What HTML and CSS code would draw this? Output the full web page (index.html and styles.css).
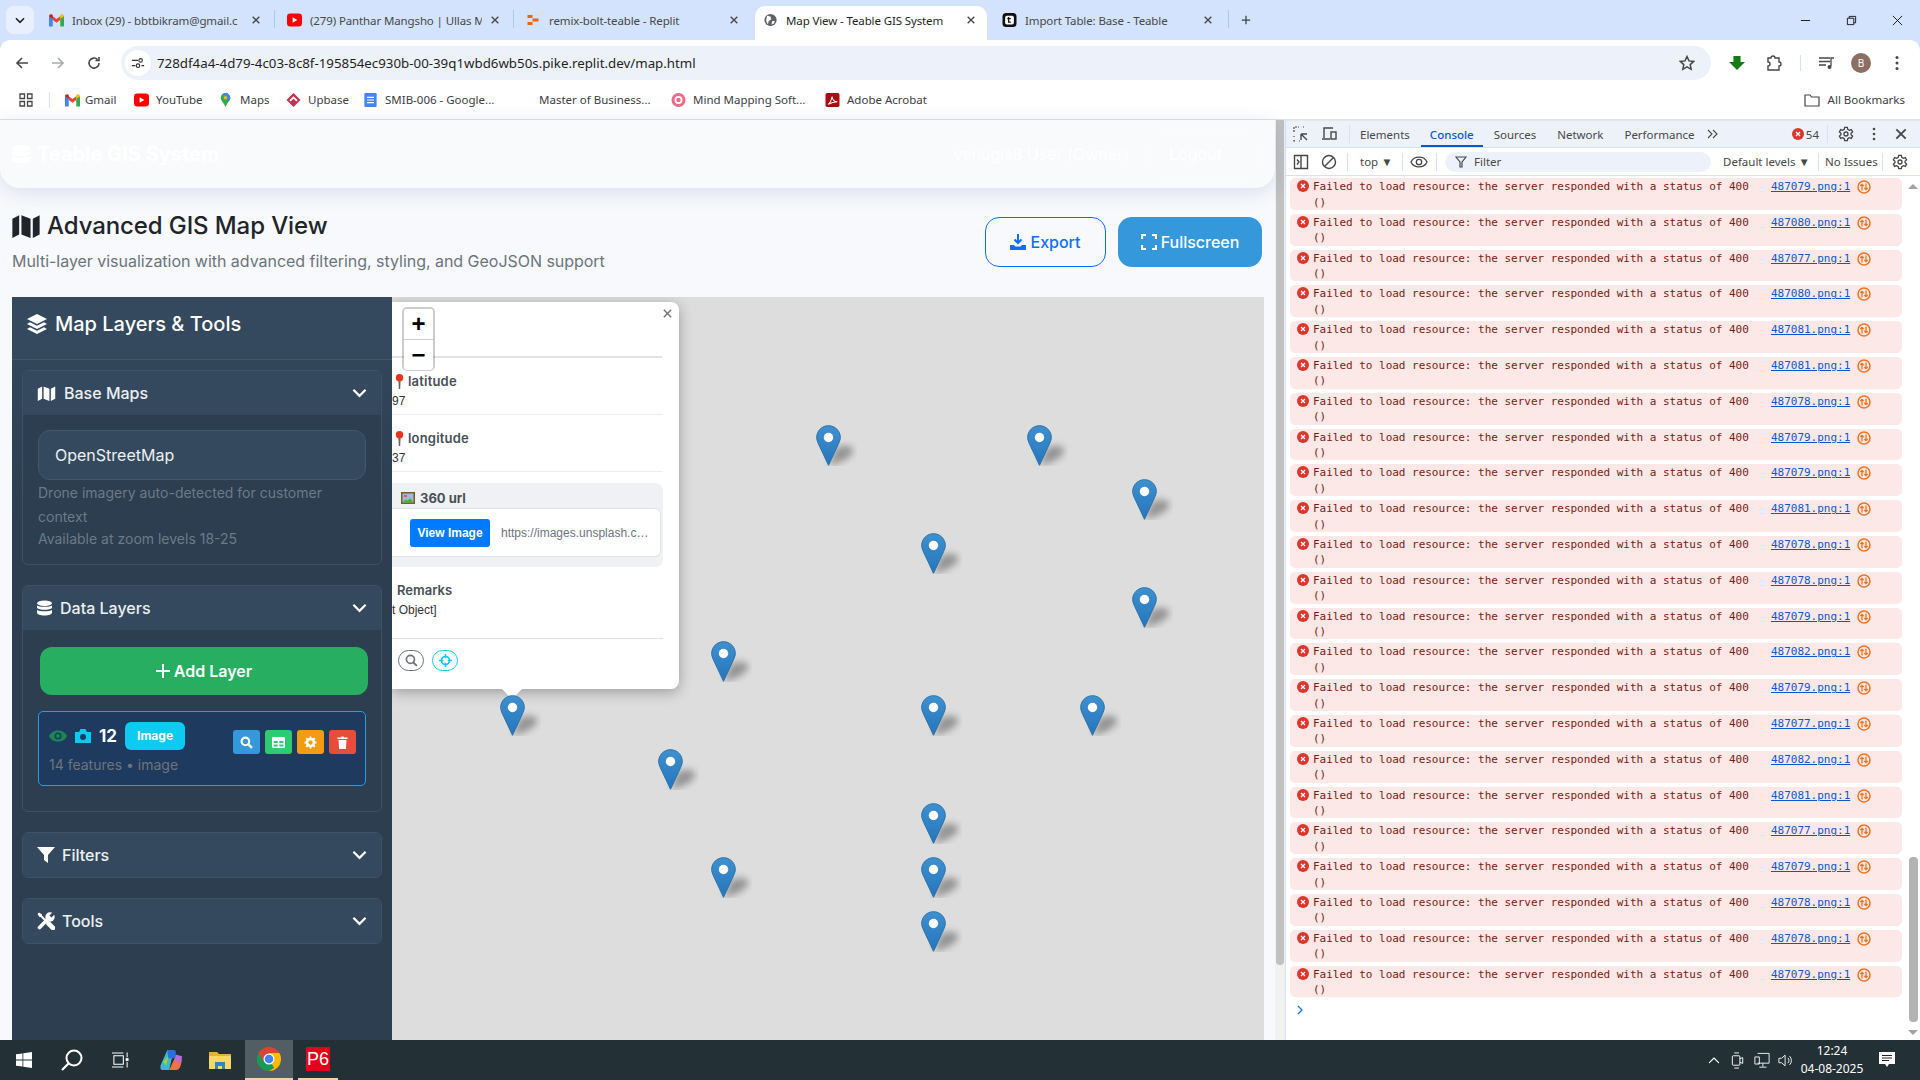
FILE: index.html
```html
<!DOCTYPE html>
<html>
<head>
  <meta charset="UTF-8">
  <title>Map View - Teable GIS System</title>
  <link rel="stylesheet" href="styles.css">
</head>
<body>
  <svg class="defs" width="0" height="0">
    <defs>
      <symbol id="i-close" viewBox="0 0 12 12"><path d="M2 2l8 8M10 2l-8 8" fill="none" stroke="currentColor" stroke-width="1.6"/></symbol>
      <symbol id="i-gmail" viewBox="0 0 16 14"><path d="M0 3l2 -1 2 1v11H1a1 1 0 0 1-1-1z" fill="#4285f4"/><path d="M12 3l2-1 2 1v10a1 1 0 0 1-1 1h-3z" fill="#34a853"/><path d="M4 7V3l4 3 4-3v4l-4 3z" fill="#ea4335"/><path d="M0 3c0-2 2-3 4-1.500V6z" fill="#c5221f"/><path d="M12 1.500c2-1.500 4-.5 4 1.500l-4 3z" fill="#fbbc04"/></symbol>
      <symbol id="i-yt" viewBox="0 0 16 14"><rect width="16" height="14" y="0" rx="3.500" fill="#f00"/><path d="M6 4l5 3-5 3z" fill="#fff"/></symbol>
      <symbol id="i-err" viewBox="0 0 12 12"><circle cx="6" cy="6" r="6" fill="#dc362e"/><path d="M4 4l4 4M8 4l-4 4" stroke="#fff" stroke-width="1.300"/></symbol>
      <symbol id="i-net" viewBox="0 0 14 14"><circle cx="7" cy="7" r="6" fill="none" stroke="#ee7423" stroke-width="1.500"/><path d="M5 10.500V4.500M3.300 6L5 4.300 6.700 6M9 3.500v6M7.300 8L9 9.700 10.700 8" fill="none" stroke="#ee7423" stroke-width="1.300"/></symbol>
      <symbol id="i-gear" viewBox="0 0 24 24"><path d="M10 2h4l.6 3 2.400 1.400 2.900-1 2 3.500-2.300 2v2.200l2.300 2-2 3.500-2.900-1-2.400 1.400-.6 3h-4l-.6-3L7 17.600l-2.900 1-2-3.500 2.300-2v-2.200l-2.300-2 2-3.500 2.900 1L9.400 5z" fill="none" stroke="currentColor" stroke-width="2"/><circle cx="12" cy="12" r="3" fill="none" stroke="currentColor" stroke-width="2"/></symbol>
      <symbol id="i-map" viewBox="0 0 24 22"><path d="M0 5l6-3v17l-6 3zM8 2l8 3v17l-8-3zM18 5l6-3v17l-6 3z" fill="currentColor"/></symbol>
      <symbol id="i-down" viewBox="0 0 16 10"><path d="M1.500 1.500L8 8l6.500-6.500" fill="none" stroke="currentColor" stroke-width="2.400"/></symbol>
      <symbol id="i-db" viewBox="0 0 16 16"><ellipse cx="8" cy="3" rx="8" ry="3" fill="currentColor"/><path d="M0 5.200c2 2 14 2 16 0V8c-2 2.500-14 2.500-16 0zM0 10c2 2 14 2 16 0v3c0 1.700-3.600 3-8 3s-8-1.300-8-3z" fill="currentColor"/></symbol>
      <symbol id="i-marker" viewBox="0 0 41 41">
        <path class="m-shadow" d="M13 40.500L19 24c7-5 17-4 18 1s-9 12-24 15.500z"/>
        <path d="M12.500 .7C5.900 .7 .7 5.900 .7 12.400c0 2.300 .8 4.300 1.700 6.400L12.500 40.300l10-21.500c.9-2.100 1.800-4.100 1.800-6.400C24.300 5.900 19.100 .7 12.500 .7z" fill="url(#pin)" stroke="#2a72a8"/>
        <circle cx="12.500" cy="12.500" r="4.700" fill="#fff"/>
      </symbol>
      <symbol id="i-pin" viewBox="0 0 8 14"><path d="M3 6h2l-.4 8h-1.200z" fill="#666"/><circle cx="4" cy="4" r="3.300" fill="#e8341c"/></symbol>
      <linearGradient id="pin" x1="0" y1="0" x2="0" y2="1"><stop offset="0" stop-color="#3f90cf"/><stop offset="1" stop-color="#2475bd"/></linearGradient>
    </defs>
  </svg>

  <div class="chrome">
    <div class="tabstrip">
      <div class="tabsearch"><svg class="ico10" viewBox="0 0 16 10"><use href="#i-down"/></svg></div>
      <div class="tab"><svg class="favicon"><use href="#i-gmail"/></svg><span class="tab-title">Inbox (29) - bbtbikram@gmail.c</span><svg class="tab-x"><use href="#i-close"/></svg></div>
      <div class="tab"><svg class="favicon"><use href="#i-yt"/></svg><span class="tab-title">(279) Panthar Mangsho | Ullas M</span><svg class="tab-x"><use href="#i-close"/></svg></div>
      <div class="tab no-sep"><svg class="favicon" viewBox="0 0 14 14"><path d="M1 2h5v3H1zM6 5.500h6v3H6zM1 9h5v3H1z" fill="#f26207"/></svg><span class="tab-title">remix-bolt-teable - Replit</span><svg class="tab-x"><use href="#i-close"/></svg></div>
      <div class="tab active"><svg class="favicon" viewBox="0 0 16 16"><circle cx="8" cy="8" r="7" fill="#5f6368"/><path d="M4 3l4 1 1 3-3 2-1 4-2-4zM10 9l3 0-1 3-3 1z" fill="#fff"/></svg><span class="tab-title">Map View - Teable GIS System</span><svg class="tab-x"><use href="#i-close"/></svg></div>
      <div class="tab no-sep"><svg class="favicon" viewBox="0 0 16 16"><rect width="16" height="16" rx="4" fill="#111"/><rect x="3" y="3" width="10" height="10" rx="2" fill="#fff"/><path d="M7 4.500v6h2.500M5.500 6.500h4" fill="none" stroke="#111" stroke-width="1.500"/></svg><span class="tab-title">Import Table: Base - Teable</span><svg class="tab-x"><use href="#i-close"/></svg></div>
      <span class="tab-sep"></span>
      <svg class="newtab" viewBox="0 0 12 12"><path d="M6 1v10M1 6h10" stroke="#3c4043" stroke-width="1.500"/></svg>
      <div class="winctl">
        <svg viewBox="0 0 12 12"><path d="M1 6h10" stroke="#111" stroke-width="1"/></svg>
        <svg viewBox="0 0 12 12"><path d="M1.500 3.500h7v7h-7zM3.500 3.500v-2h7v7h-2" fill="none" stroke="#111" stroke-width="1"/></svg>
        <svg viewBox="0 0 12 12"><path d="M1 1l10 10M11 1L1 11" stroke="#111" stroke-width="1"/></svg>
      </div>
    </div>
    <div class="toolbar">
      <svg class="nav" viewBox="0 0 16 16"><path d="M14 8H3M8 3L3 8l5 5" fill="none" stroke="#474747" stroke-width="1.600"/></svg>
      <svg class="nav" viewBox="0 0 16 16"><path d="M2 8h11M8 3l5 5-5 5" fill="none" stroke="#a8abb0" stroke-width="1.600"/></svg>
      <svg class="nav" viewBox="0 0 16 16"><path d="M13 8a5 5 0 1 1-1.500-3.500M13 2v3.500H9.500" fill="none" stroke="#474747" stroke-width="1.600"/></svg>
      <div class="omnibox">
        <div class="site-ico"><svg viewBox="0 0 16 16"><path d="M1 5h7M12 11h3M1 11h4" stroke="#333" stroke-width="1.400"/><circle cx="11" cy="5" r="2" fill="none" stroke="#333" stroke-width="1.300"/><circle cx="8" cy="11" r="2" fill="none" stroke="#333" stroke-width="1.300"/></svg></div>
        <span class="url">728df4a4-4d79-4c03-8c8f-195854ec930b-00-39q1wbd6wb50s.pike.replit.dev/map.html</span>
        <svg class="star" viewBox="0 0 16 16"><path d="M8 1.500l2 4.400 4.700.5-3.500 3.200 1 4.700L8 11.900l-4.200 2.400 1-4.700L1.300 6.400 6 5.900z" fill="none" stroke="#474747" stroke-width="1.500"/></svg>
      </div>
      <div class="tb-icons">
        <svg viewBox="0 0 18 16"><path d="M5 0h8v7h5l-9 9-9-9h5z" fill="#137c13"/></svg>
        <svg viewBox="0 0 16 16"><path d="M2 3h3a2 2 0 0 1 4 0h4v4a2 2 0 0 1 0 4v4H2v-4a2 2 0 0 0 0-4z" fill="none" stroke="#474747" stroke-width="1.400"/></svg>
        <span class="tb-sep"></span>
        <svg viewBox="0 0 16 16"><path d="M0 3h11M0 6.500h11M0 10h7" stroke="#474747" stroke-width="1.300"/><path d="M12 11V3h3" fill="none" stroke="#474747" stroke-width="1.300"/><circle cx="10.500" cy="12" r="2" fill="#474747"/></svg>
        <span class="avatar">B</span>
        <svg viewBox="0 0 16 16"><circle cx="8" cy="2.500" r="1.500" fill="#474747"/><circle cx="8" cy="8" r="1.500" fill="#474747"/><circle cx="8" cy="13.500" r="1.500" fill="#474747"/></svg>
      </div>
    </div>
    <div class="bookmarks">
      <svg class="apps" viewBox="0 0 14 14"><path d="M1 1h4.500v4.500H1zM8.500 1H13v4.500H8.500zM1 8.500h4.500V13H1zM8.500 8.500H13V13H8.500z" fill="none" stroke="#474747" stroke-width="1.300"/></svg>
      <span class="bm-sep"></span>
      <span class="bm bm-gmail"><svg><use href="#i-gmail"/></svg>Gmail</span>
      <span class="bm bm-yt"><svg><use href="#i-yt"/></svg>YouTube</span>
      <span class="bm bm-maps"><svg viewBox="0 0 12 16"><path d="M6 0a5.500 5.500 0 0 1 5.500 5.500C11.500 9 8 11 6 16 4 11 .5 9 .5 5.500A5.500 5.500 0 0 1 6 0z" fill="#34a853"/><path d="M2 2l8 7c1-1.500 1.500-2.500 1.500-3.500A5.500 5.500 0 0 0 6 0z" fill="#4285f4"/><circle cx="6" cy="5.500" r="2" fill="#fbbc04"/></svg>Maps</span>
      <span class="bm bm-up"><svg viewBox="0 0 16 16"><path d="M8 0l8 8-8 8-8-8z" fill="#c2334d"/><path d="M4 9l4-4 4 4" fill="none" stroke="#fff" stroke-width="2"/></svg>Upbase</span>
      <span class="bm bm-smib"><svg viewBox="0 0 14 16"><rect width="14" height="16" rx="1.500" fill="#4285f4"/><path d="M3 5h8M3 8h8M3 11h8" stroke="#fff" stroke-width="1.400"/></svg>SMIB-006 - Google...</span>
      <span class="bm bm-master">Master of Business...</span>
      <span class="bm bm-mind"><svg viewBox="0 0 16 16"><circle cx="8" cy="8" r="8" fill="#f06a8a"/><circle cx="8" cy="8" r="3.500" fill="none" stroke="#fff" stroke-width="2"/></svg>Mind Mapping Soft...</span>
      <span class="bm bm-acro"><svg viewBox="0 0 16 16"><rect width="16" height="16" rx="2" fill="#a80e10"/><path d="M3 13c3-2 4-6 4.500-9 .5 4 3 6 6 6-3 0-7 1-10.500 3z" fill="none" stroke="#fff" stroke-width="1.200"/></svg>Adobe Acrobat</span>
      <span class="bm bm-all"><svg viewBox="0 0 16 14"><path d="M1 2h5l1.500 2H15v9H1z" fill="none" stroke="#474747" stroke-width="1.200"/></svg>All Bookmarks</span>
    </div>
  </div>

  <div class="workarea">
    <div class="page">
      <header class="appbar">
        <div class="brand"><svg class="brand-ico"><use href="#i-db"/></svg>Teable GIS System</div>
        <div class="user">venugis8 User (Owner)</div>
        <div class="signout">Logout</div>
      </header>
      <div class="titlerow">
        <div>
          <h1><svg class="h1-ico"><use href="#i-map"/></svg>Advanced GIS Map View</h1>
          <p class="lead">Multi-layer visualization with advanced filtering, styling, and GeoJSON support</p>
        </div>
        <div class="actions">
          <button class="btn btn-outline"><svg viewBox="0 0 16 16"><path d="M8 0v9M4.500 5.500L8 9l3.500-3.500" fill="none" stroke="currentColor" stroke-width="2"/><path d="M0 11h4l1.500 1.500h5L12 11h4v5H0z" fill="currentColor"/></svg>Export</button>
          <button class="btn btn-blue"><svg viewBox="0 0 16 16"><path d="M1 5V1h4M11 1h4v4M15 11v4h-4M5 15H1v-4" fill="none" stroke="currentColor" stroke-width="2.200"/></svg>Fullscreen</button>
        </div>
      </div>
      <div class="mapwrap">
        <aside class="sidebar">
          <div class="side-head">
            <svg viewBox="0 0 20 20"><path d="M10 0l10 5-10 5L0 5z" fill="currentColor"/><path d="M3 8.300L0 10l10 5 10-5-3-1.700-7 3.500zM3 13.300L0 15l10 5 10-5-3-1.700-7 3.500z" fill="currentColor"/></svg>
            <span>Map Layers &amp; Tools</span>
          </div>
          <section class="panel">
            <div class="panel-head"><svg class="p-ico p-map"><use href="#i-map"/></svg><span>Base Maps</span><svg class="chev"><use href="#i-down"/></svg></div>
            <div class="panel-body basemaps">
              <div class="select">OpenStreetMap</div>
              <p class="hint">Drone imagery auto-detected for customer context</p>
              <p class="hint hint-2">Available at zoom levels 18-25</p>
            </div>
          </section>
          <section class="panel">
            <div class="panel-head"><svg class="p-ico p-db"><use href="#i-db"/></svg><span>Data Layers</span><svg class="chev"><use href="#i-down"/></svg></div>
            <div class="panel-body datalayers">
              <div class="add-layer"><svg viewBox="0 0 14 14"><path d="M7 0v14M0 7h14" stroke="#fff" stroke-width="2"/></svg>Add Layer</div>
              <div class="layer">
                <div class="layer-left">
                  <div class="layer-top">
                    <svg class="eye" viewBox="0 0 18 12"><path d="M0 6c3-7.500 15-7.500 18 0-3 7.500-15 7.500-18 0z" fill="#198754"/><circle cx="9" cy="6" r="3.500" fill="#1e3a5f"/><circle cx="9" cy="6" r="2" fill="#198754"/></svg>
                    <svg class="cam" viewBox="0 0 16 14"><path d="M0 3h4l1.500-3h5L12 3h4v11H0z" fill="#0dcaf0"/><circle cx="8" cy="8" r="3" fill="#1e3a5f"/></svg>
                    <b>12</b>
                    <span class="badge">Image</span>
                  </div>
                  <div class="layer-sub">14 features • image</div>
                </div>
                <div class="layer-btns">
                  <span class="lb lb-blue"><svg viewBox="0 0 12 12"><circle cx="5" cy="5" r="3.500" fill="none" stroke="#fff" stroke-width="2"/><path d="M7.500 7.500L11 11" stroke="#fff" stroke-width="2.200"/></svg></span>
                  <span class="lb lb-green"><svg viewBox="0 0 12 10"><path d="M0 1a1 1 0 0 1 1-1h10a1 1 0 0 1 1 1v8a1 1 0 0 1-1 1H1a1 1 0 0 1-1-1zM1.500 3.500v2h3.700v-2zm5.300 0v2h3.700v-2zm-5.300 3.300v1.800h3.700V6.800zm5.300 0v1.800h3.700V6.800z" fill="#fff" fill-rule="evenodd"/></svg></span>
                  <span class="lb lb-orange"><svg viewBox="0 0 12 12"><circle cx="6" cy="6" r="3.200" fill="none" stroke="#fff" stroke-width="2.400"/><path d="M6 .5v2M6 9.500v2M.5 6h2M9.500 6h2M2 2l1.500 1.500M8.500 8.500L10 10M10 2L8.500 3.500M3.500 8.500L2 10" stroke="#fff" stroke-width="1.800"/></svg></span>
                  <span class="lb lb-red"><svg viewBox="0 0 12 13"><path d="M1 1.500h3.500L5 .5h2l.5 1H11V3H1zM2 4h8l-.6 9H2.600z" fill="#fff"/></svg></span>
                </div>
              </div>
            </div>
          </section>
          <section class="panel">
            <div class="panel-head"><svg class="p-ico" viewBox="0 0 18 16"><path d="M0 0h18l-7 8v8l-4-3V8z" fill="currentColor"/></svg><span>Filters</span><svg class="chev"><use href="#i-down"/></svg></div>
          </section>
          <section class="panel">
            <div class="panel-head"><svg class="p-ico p-tools" viewBox="0 0 18 18"><path d="M2 2l9.500 9.500" stroke="currentColor" stroke-width="2"/><path d="M.5 2L2 .5l3 2-.2 2.300-2.300.2z" fill="currentColor"/><path d="M11.500 11.500l4.500 4.500" stroke="currentColor" stroke-width="4.600" stroke-linecap="round"/><path d="M2.500 15.500L11 7" stroke="currentColor" stroke-width="3.600" stroke-linecap="round"/><circle cx="13" cy="5" r="4.700" fill="currentColor"/><path d="M13.500 4.500L18 0" stroke="#34495e" stroke-width="3"/></svg><span>Tools</span><svg class="chev"><use href="#i-down"/></svg></div>
          </section>
        </aside>
        <div class="map">
          <svg class="marker" style="left:424px;top:128px"><use href="#i-marker"/></svg>
          <svg class="marker" style="left:635px;top:128px"><use href="#i-marker"/></svg>
          <svg class="marker" style="left:740px;top:182px"><use href="#i-marker"/></svg>
          <svg class="marker" style="left:529px;top:236px"><use href="#i-marker"/></svg>
          <svg class="marker" style="left:740px;top:290px"><use href="#i-marker"/></svg>
          <svg class="marker" style="left:319px;top:344px"><use href="#i-marker"/></svg>
          <svg class="marker" style="left:529px;top:398px"><use href="#i-marker"/></svg>
          <svg class="marker" style="left:688px;top:398px"><use href="#i-marker"/></svg>
          <svg class="marker" style="left:266px;top:452px"><use href="#i-marker"/></svg>
          <svg class="marker" style="left:529px;top:506px"><use href="#i-marker"/></svg>
          <svg class="marker" style="left:319px;top:560px"><use href="#i-marker"/></svg>
          <svg class="marker" style="left:529px;top:560px"><use href="#i-marker"/></svg>
          <svg class="marker" style="left:529px;top:614px"><use href="#i-marker"/></svg>

          <div class="popup">
            <span class="popup-x"><svg><use href="#i-close"/></svg></span>
            <div class="pop-title"></div>
            <div class="pop-row">
              <div class="pop-label"><svg class="pushpin"><use href="#i-pin"/></svg>latitude</div>
              <div class="pop-val">97</div>
            </div>
            <div class="pop-row">
              <div class="pop-label"><svg class="pushpin"><use href="#i-pin"/></svg>longitude</div>
              <div class="pop-val">37</div>
            </div>
            <div class="urlbox">
              <div class="urlbox-head"><svg viewBox="0 0 14 12"><rect width="14" height="12" fill="#7a5c1e"/><rect x="1.500" y="1.500" width="11" height="9" fill="#9bd"/><path d="M1.500 10.500l3-3 2 1 3-2 3 4z" fill="#5a3"/><rect x="3" y="3" width="3" height="2" fill="#e55"/></svg>360 url</div>
              <div class="urlbox-body">
                <span class="viewbtn">View Image</span>
                <span class="urltext">https://images.unsplash.c…</span>
              </div>
            </div>
            <div class="pop-remarks">
              <div class="pop-label">Remarks</div>
              <div class="pop-val">t Object]</div>
            </div>
            <div class="pop-btns">
              <span class="pill pill-gray"><svg viewBox="0 0 12 12"><circle cx="5" cy="5" r="3.700" fill="none" stroke="#6c757d" stroke-width="1.600"/><path d="M7.800 7.800L11 11" stroke="#6c757d" stroke-width="1.800"/></svg></span>
              <span class="pill pill-cyan"><svg viewBox="0 0 12 12"><circle cx="6" cy="6" r="3.700" fill="none" stroke="#0dcaf0" stroke-width="1.600"/><path d="M6 0v4M6 8v4M0 6h4M8 6h4" stroke="#0dcaf0" stroke-width="1.400"/></svg></span>
            </div>
            <span class="popup-tip"></span>
          </div>
          <svg class="marker marker-top" style="left:108px;top:398px"><use href="#i-marker"/></svg>

          <div class="zoomctl">
            <span>+</span>
            <span>−</span>
          </div>
        </div>
      </div>
    </div>
    <div class="page-scroll"><span></span></div>

    <div class="devtools">
      <div class="dt-tabs">
        <svg class="dt-ico" viewBox="0 0 16 16"><path d="M1 6V1h5M10 1h1M1 10v1M1 14v1h1M6 15h1" fill="none" stroke="#474747" stroke-width="1.200" stroke-dasharray="2 1"/><path d="M8 8h6M8 8v6M8 8l6 6" fill="none" stroke="#474747" stroke-width="1.400"/></svg>
        <svg class="dt-ico" viewBox="0 0 16 16"><path d="M3 12V2h9M1 13h8" fill="none" stroke="#474747" stroke-width="1.400"/><rect x="10" y="6" width="5" height="7" fill="none" stroke="#474747" stroke-width="1.400"/></svg>
        <span class="dt-sep"></span>
        <span class="dt-tab">Elements</span>
        <span class="dt-tab current">Console</span>
        <span class="dt-tab">Sources</span>
        <span class="dt-tab">Network</span>
        <span class="dt-tab">Performance</span>
        <svg class="dt-more" viewBox="0 0 12 10"><path d="M1 1l4 4-4 4M6 1l4 4-4 4" fill="none" stroke="#474747" stroke-width="1.100"/></svg>
        <span class="dt-right">
          <svg class="dt-err"><use href="#i-err"/></svg><span class="dt-count">54</span>
          <span class="dt-sep"></span>
          <svg class="dt-ico dt-gear"><use href="#i-gear"/></svg>
          <svg class="dt-ico" viewBox="0 0 16 16"><circle cx="8" cy="3" r="1.300" fill="#474747"/><circle cx="8" cy="8" r="1.300" fill="#474747"/><circle cx="8" cy="13" r="1.300" fill="#474747"/></svg>
          <svg class="dt-ico dt-x"><use href="#i-close"/></svg>
        </span>
      </div>
      <div class="dt-filter">
        <svg class="dt-ico" viewBox="0 0 16 16"><path d="M1.500 1.500h13v13h-13zM8 1.500v13M4 5.500L6 8l-2 2.500" fill="none" stroke="#474747" stroke-width="1.400"/></svg>
        <svg class="dt-ico" viewBox="0 0 16 16"><circle cx="8" cy="8" r="6.500" fill="none" stroke="#474747" stroke-width="1.400"/><path d="M3.500 12.500l9-9" stroke="#474747" stroke-width="1.400"/></svg>
        <span class="dt-sep"></span>
        <span class="dt-top">top ▼</span>
        <span class="dt-sep"></span>
        <svg class="dt-eye" viewBox="0 0 18 12"><path d="M1 6c3-6.500 13-6.500 16 0-3 6.500-13 6.500-16 0z" fill="none" stroke="#474747" stroke-width="1.300"/><circle cx="9" cy="6" r="2.700" fill="none" stroke="#474747" stroke-width="1.300"/></svg>
        <span class="dt-sep"></span>
        <div class="dt-input"><svg viewBox="0 0 12 12"><path d="M1 1h10L7 6v5H5V6z" fill="none" stroke="#474747" stroke-width="1.200"/></svg>Filter</div>
        <span class="dt-levels">Default levels ▼</span>
        <span class="dt-sep"></span>
        <span class="dt-issues">No Issues</span>
        <span class="dt-sep"></span>
        <svg class="dt-ico dt-gear"><use href="#i-gear"/></svg>
      </div>
      <div class="console">
        <div class="messages">
          <div class="msg"><svg class="msg-err"><use href="#i-err"/></svg><pre>Failed to load resource: the server responded with a status of 400
()</pre><a>487079.png:1</a><svg class="msg-net"><use href="#i-net"/></svg></div>
          <div class="msg"><svg class="msg-err"><use href="#i-err"/></svg><pre>Failed to load resource: the server responded with a status of 400
()</pre><a>487080.png:1</a><svg class="msg-net"><use href="#i-net"/></svg></div>
          <div class="msg"><svg class="msg-err"><use href="#i-err"/></svg><pre>Failed to load resource: the server responded with a status of 400
()</pre><a>487077.png:1</a><svg class="msg-net"><use href="#i-net"/></svg></div>
          <div class="msg"><svg class="msg-err"><use href="#i-err"/></svg><pre>Failed to load resource: the server responded with a status of 400
()</pre><a>487080.png:1</a><svg class="msg-net"><use href="#i-net"/></svg></div>
          <div class="msg"><svg class="msg-err"><use href="#i-err"/></svg><pre>Failed to load resource: the server responded with a status of 400
()</pre><a>487081.png:1</a><svg class="msg-net"><use href="#i-net"/></svg></div>
          <div class="msg"><svg class="msg-err"><use href="#i-err"/></svg><pre>Failed to load resource: the server responded with a status of 400
()</pre><a>487081.png:1</a><svg class="msg-net"><use href="#i-net"/></svg></div>
          <div class="msg"><svg class="msg-err"><use href="#i-err"/></svg><pre>Failed to load resource: the server responded with a status of 400
()</pre><a>487078.png:1</a><svg class="msg-net"><use href="#i-net"/></svg></div>
          <div class="msg"><svg class="msg-err"><use href="#i-err"/></svg><pre>Failed to load resource: the server responded with a status of 400
()</pre><a>487079.png:1</a><svg class="msg-net"><use href="#i-net"/></svg></div>
          <div class="msg"><svg class="msg-err"><use href="#i-err"/></svg><pre>Failed to load resource: the server responded with a status of 400
()</pre><a>487079.png:1</a><svg class="msg-net"><use href="#i-net"/></svg></div>
          <div class="msg"><svg class="msg-err"><use href="#i-err"/></svg><pre>Failed to load resource: the server responded with a status of 400
()</pre><a>487081.png:1</a><svg class="msg-net"><use href="#i-net"/></svg></div>
          <div class="msg"><svg class="msg-err"><use href="#i-err"/></svg><pre>Failed to load resource: the server responded with a status of 400
()</pre><a>487078.png:1</a><svg class="msg-net"><use href="#i-net"/></svg></div>
          <div class="msg"><svg class="msg-err"><use href="#i-err"/></svg><pre>Failed to load resource: the server responded with a status of 400
()</pre><a>487078.png:1</a><svg class="msg-net"><use href="#i-net"/></svg></div>
          <div class="msg"><svg class="msg-err"><use href="#i-err"/></svg><pre>Failed to load resource: the server responded with a status of 400
()</pre><a>487079.png:1</a><svg class="msg-net"><use href="#i-net"/></svg></div>
          <div class="msg"><svg class="msg-err"><use href="#i-err"/></svg><pre>Failed to load resource: the server responded with a status of 400
()</pre><a>487082.png:1</a><svg class="msg-net"><use href="#i-net"/></svg></div>
          <div class="msg"><svg class="msg-err"><use href="#i-err"/></svg><pre>Failed to load resource: the server responded with a status of 400
()</pre><a>487079.png:1</a><svg class="msg-net"><use href="#i-net"/></svg></div>
          <div class="msg"><svg class="msg-err"><use href="#i-err"/></svg><pre>Failed to load resource: the server responded with a status of 400
()</pre><a>487077.png:1</a><svg class="msg-net"><use href="#i-net"/></svg></div>
          <div class="msg"><svg class="msg-err"><use href="#i-err"/></svg><pre>Failed to load resource: the server responded with a status of 400
()</pre><a>487082.png:1</a><svg class="msg-net"><use href="#i-net"/></svg></div>
          <div class="msg"><svg class="msg-err"><use href="#i-err"/></svg><pre>Failed to load resource: the server responded with a status of 400
()</pre><a>487081.png:1</a><svg class="msg-net"><use href="#i-net"/></svg></div>
          <div class="msg"><svg class="msg-err"><use href="#i-err"/></svg><pre>Failed to load resource: the server responded with a status of 400
()</pre><a>487077.png:1</a><svg class="msg-net"><use href="#i-net"/></svg></div>
          <div class="msg"><svg class="msg-err"><use href="#i-err"/></svg><pre>Failed to load resource: the server responded with a status of 400
()</pre><a>487079.png:1</a><svg class="msg-net"><use href="#i-net"/></svg></div>
          <div class="msg"><svg class="msg-err"><use href="#i-err"/></svg><pre>Failed to load resource: the server responded with a status of 400
()</pre><a>487078.png:1</a><svg class="msg-net"><use href="#i-net"/></svg></div>
          <div class="msg"><svg class="msg-err"><use href="#i-err"/></svg><pre>Failed to load resource: the server responded with a status of 400
()</pre><a>487078.png:1</a><svg class="msg-net"><use href="#i-net"/></svg></div>
          <div class="msg"><svg class="msg-err"><use href="#i-err"/></svg><pre>Failed to load resource: the server responded with a status of 400
()</pre><a>487079.png:1</a><svg class="msg-net"><use href="#i-net"/></svg></div>
          <svg class="prompt" viewBox="0 0 6 10"><path d="M1 1l4 4-4 4" fill="none" stroke="#1a73e8" stroke-width="1.300"/></svg>
        </div>
        <div class="con-scroll">
          <i class="arrow-up"></i>
          <span class="con-thumb"></span>
          <i class="arrow-down"></i>
        </div>
      </div>
    </div>
  </div>

  <div class="taskbar">
    <svg class="tk tk-win" viewBox="0 0 16 16"><path d="M0 2.300l6.500-.9v6.200H0zM7.300 1.300L16 0v7.600H7.300zM0 8.400h6.500v6.200L0 13.700zM7.300 8.400H16V16l-8.700-1.300z" fill="#fff"/></svg>
    <svg class="tk tk-search" viewBox="0 0 22 22"><circle cx="13" cy="9" r="7.500" fill="none" stroke="#fff" stroke-width="2"/><path d="M7.500 14.500L1 21" stroke="#fff" stroke-width="2.200"/></svg>
    <svg class="tk tk-view" viewBox="0 0 18 16"><path d="M2 3.500h10v9H2zM0 .5h12M0 15.500h12M16 0v5M16 10v6" fill="none" stroke="#fff" stroke-width="1.100"/><rect x="14.500" y="6" width="3" height="3" fill="#fff"/></svg>
    <svg class="tk tk-copilot" viewBox="0 0 24 24"><path d="M8 1h7l-5 22H3C0 23 0 20 1 17z" fill="#3fb6c9"/><path d="M8 1h7c2 0 3 2 2 5l-1 4H9z" fill="#2a6fe0"/><path d="M16 10h6c2 0 2 3 1 6-1 5-3 7-6 7h-7z" fill="#f0704a"/><path d="M17 6l7 2-1 7-7-3z" fill="#b66be0"/><path d="M3 14l6-6-2 10z" fill="#9ad14b"/></svg>
    <svg class="tk tk-files" viewBox="0 0 22 18"><path d="M0 1h8l2 2h12v15H0z" fill="#e8b034"/><rect y="5" width="22" height="13" fill="#fbd669"/><path d="M6 11h10v7h-3v-3H9v3H6z" fill="#2f86c9"/></svg>
    <div class="tk-chrome"><svg viewBox="0 0 24 24"><circle cx="12" cy="12" r="12" fill="#db4437"/><path d="M12 12L1.600 18A12 12 0 0 0 12 24l5.200-3z" fill="#0f9d58"/><path d="M12 12l5.200 9L12 24A12 12 0 0 0 24 12a12 12 0 0 0-1.600-6H12z" fill="#fbbc04"/><path d="M1.600 6A12 12 0 0 0 1.600 18L6.800 15z" fill="#0f9d58"/><circle cx="12" cy="12" r="5.500" fill="#fff"/><circle cx="12" cy="12" r="4.300" fill="#4285f4"/></svg></div>
    <div class="tk-p6"><span>P6</span></div>
    <div class="tray">
      <svg class="tray-chev" viewBox="0 0 12 7"><path d="M1 6l5-5 5 5" fill="none" stroke="#fff" stroke-width="1.100"/></svg>
      <svg class="tray-ico" viewBox="0 0 14 18"><rect x="1" y="4" width="8" height="10" rx="1" fill="none" stroke="#fff"/><path d="M9 7l3-1v6l-3-1M3 1h5M3 17h5" fill="none" stroke="#fff"/></svg>
      <svg class="tray-ico" viewBox="0 0 18 18"><path d="M4 1h13v11H4M1 5h5v8H1zM10 12v4M6 16.500h8" fill="none" stroke="#fff"/></svg>
      <svg class="tray-ico" viewBox="0 0 18 18"><path d="M1 6.500h3L8 3v12l-4-3.500H1zM11 6a4 4 0 0 1 0 6M13 4a7 7 0 0 1 0 10" fill="none" stroke="#fff"/></svg>
      <div class="clock"><div>12:24</div><div>04-08-2025</div></div>
      <svg class="tray-note" viewBox="0 0 16 16"><path d="M0 0h16v12H10l-2 3-2-3H0z" fill="#fff"/><path d="M3 3.500h10M3 6h10M3 8.500h7" stroke="#222" stroke-width="1"/></svg>
    </div>
  </div>
</body>
</html>
```

FILE: styles.css
```css
* {
  box-sizing: border-box;
}

html, body {
  margin: 0;
  padding: 0;
  height: 1080px;
  overflow: hidden;
}

body {
  display: flex;
  flex-direction: column;
  font-family: "Noto Sans", sans-serif;
  background-color: #ffffff;
}

svg {
  display: block;
  flex: none;
}

.defs {
  position: absolute;
}

/* browser chrome */
.chrome {
  height: 120px;
  flex: none;
  background-color: #d3e3fd;
}

.tabstrip {
  height: 40px;
  display: flex;
  align-items: flex-end;
  padding-left: 6px;
}

.tabsearch {
  width: 28px;
  height: 28px;
  margin-bottom: 6px;
  border-radius: 8px;
  background-color: #e8f0fd;
  display: flex;
  align-items: center;
  justify-content: center;
}

.ico10 {
  width: 10px;
  height: 7px;
  color: #1f1f1f;
}

.tab {
  width: 239px;
  height: 34px;
  padding: 0 14px 6px 12px;
  display: flex;
  align-items: center;
  font-size: 11.500px;
  color: #474747;
  position: relative;
  flex: none;
}

.tabsearch + .tab {
  width: 240px;
  margin-left: 1px;
  padding-left: 14px;
}

.tab::after {
  content: "";
  position: absolute;
  right: 0;
  top: 4px;
  height: 18px;
  width: 1px;
  background-color: #a8c7fa;
}

.tab.no-sep::after,
.tab.active::after {
  display: none;
}

.tab.active {
  width: 232px;
  margin-left: 2px;
  padding-left: 8px;
  padding-right: 11px;
  border-radius: 10px 10px 0 0;
  background-color: #ffffff;
  color: #1f1f1f;
}

.tab.active + .tab {
  margin-left: 1px;
  padding-left: 14px;
  padding-right: 12px;
  width: 237px;
}

.favicon {
  width: 15px;
  height: 14px;
  margin-right: 8px;
}

.tab-title {
  flex: 1;
  overflow: hidden;
  white-space: nowrap;
  letter-spacing: -.12px;
}

.tab-x {
  width: 10px;
  height: 10px;
  margin-left: 8px;
  color: #474747;
}

.tab-sep {
  width: 1px;
  height: 18px;
  margin: 0 0 12px 3px;
  background-color: #a8c7fa;
}

.newtab {
  width: 10px;
  height: 10px;
  margin: 0 0 15px 12px;
}

.winctl {
  margin-left: auto;
  display: flex;
  gap: 35px;
  padding: 0 17px 14px 0;
}

.winctl svg {
  width: 11px;
  height: 11px;
}

.toolbar {
  height: 40px;
  background-color: #ffffff;
  border-radius: 10px 10px 0 0;
  display: flex;
  align-items: center;
  padding: 6px 0 0 14px;
}

.nav {
  width: 16px;
  height: 16px;
  margin-right: 20px;
}

.omnibox {
  width: 1590px;
  height: 34px;
  flex: none;
  margin-left: -1px;
  border-radius: 17px;
  background-color: #edf2fa;
  display: flex;
  align-items: center;
  padding-left: 4px;
}

.site-ico {
  width: 26px;
  height: 26px;
  border-radius: 13px;
  background-color: #ffffff;
  padding: 6px;
}

.url {
  margin-left: 6px;
  font-size: 13.300px;
  color: #1f1f1f;
}

.star {
  width: 16px;
  height: 16px;
  margin-left: auto;
  margin-right: 16px;
}

.tb-icons {
  flex: 1;
  display: flex;
  align-items: center;
  padding-left: 18px;
}

.tb-icons svg {
  width: 16px;
  height: 16px;
  margin-right: 21px;
}

.tb-sep {
  width: 1px;
  height: 16px;
  margin: 0 18px 0 -3px;
  background-color: #d3e3fd;
}

.avatar {
  width: 20px;
  height: 20px;
  border-radius: 10px;
  margin: 0 18px 0 -5px;
  background-color: #8d6e63;
  color: #ffffff;
  font-size: 10px;
  text-align: center;
  line-height: 20px;
}

.bookmarks {
  height: 40px;
  background-color: #ffffff;
  border-bottom: 1px solid #dfe1e5;
  display: flex;
  align-items: center;
  font-size: 11.500px;
  color: #3c4043;
  padding-left: 19px;
}

.apps {
  width: 14px;
  height: 14px;
  margin-right: 1px;
}

.bm-sep {
  width: 1px;
  height: 16px;
  margin: 0 15px;
  background-color: #d3e3fd;
}

.bm {
  display: flex;
  align-items: center;
  white-space: nowrap;
}

.bm svg {
  width: 15px;
  height: 14px;
  margin-right: 7px;
}

.bm-gmail svg { margin-right: 5px; }

.bm-gmail { width: 69px; }
.bm-yt { width: 84px; }
.bm-maps { width: 68px; }
.bm-up { width: 77px; }
.bm-smib { width: 176px; }
.bm-master { width: 132px; }
.bm-mind { width: 154px; }
.bm-acro { width: 400px; }
.bm-all { margin-left: auto; padding-right: 15px; }

.bm-all svg {
  width: 16px;
  height: 14px;
  margin-right: 8px;
}

/* page + devtools */
.workarea {
  flex: 1;
  min-height: 0;
  display: flex;
}

.page {
  width: 1275px;
  flex: none;
  font-family: Inter, "Liberation Sans", sans-serif;
  background-color: #f8f9fc;
  display: flex;
  flex-direction: column;
}

.appbar {
  height: 68px;
  flex: none;
  display: flex;
  align-items: center;
  padding-left: 12px;
  border-radius: 0 0 20px 20px;
  background-color: #f9fafc;
  box-shadow: 0 4px 20px rgba(44, 62, 140, .14);
  color: #ffffff;
  position: relative;
}

.brand {
  display: flex;
  align-items: center;
  gap: 7px;
  font-size: 20px;
  font-weight: 700;
}

.brand-ico {
  width: 18px;
  height: 20px;
}

.user {
  margin-left: auto;
  font-size: 16px;
}

.signout {
  width: 110px;
  margin: 0 17px 0 19px;
  padding: 14px 20px;
  border: 1px solid #fbfbfd;
  border-radius: 12px;
  font-size: 16px;
}

.titlerow {
  flex: none;
  height: 109px;
  display: flex;
  justify-content: space-between;
  padding: 21px 13px 0 12px;
}

h1 {
  margin: 0;
  display: flex;
  align-items: center;
  font-size: 24px;
  line-height: 33px;
  font-weight: 500;
  letter-spacing: -.1px;
  color: #212529;
}

.h1-ico {
  width: 28px;
  height: 25px;
  margin-right: 7px;
  color: #212529;
}

.lead {
  margin: 9px 0 0;
  font-size: 16px;
  line-height: 20px;
  letter-spacing: -.03px;
  color: #6c757d;
}

.actions {
  display: flex;
  gap: 12px;
  padding-top: 8px;
}

.btn {
  height: 50px;
  display: flex;
  align-items: center;
  justify-content: center;
  gap: 4px;
  border-radius: 14px;
  font-family: inherit;
  font-size: 16px;
  font-weight: 500;
  border: none;
}

.btn svg {
  width: 16px;
  height: 16px;
}

.btn-outline {
  width: 121px;
  border: 1px solid #0d6efd;
  background-color: transparent;
  color: #0d6efd;
}

.btn-blue {
  width: 144px;
  background-color: #3498db;
  color: #ffffff;
}

.mapwrap {
  flex: 1;
  min-height: 0;
  margin: 0 11px 0 12px;
  display: flex;
  overflow: hidden;
}

.sidebar {
  width: 380px;
  flex: none;
  padding: 0 10px;
  background: linear-gradient(180deg, #34495e 0%, #2c3e50 30%);
  color: #ecf0f1;
  position: relative;
  z-index: 5;
}

.side-head {
  height: 63px;
  margin: 0 -10px 10px;
  padding: 0 0 9px 15px;
  display: flex;
  align-items: center;
  gap: 8px;
  background-color: #34495e;
  border-bottom: 1px solid #3f566e;
  font-size: 20px;
  font-weight: 500;
  color: #ffffff;
}

.side-head svg {
  width: 20px;
  height: 20px;
}

.panel {
  margin-bottom: 20px;
  border: 1px solid #3e5266;
  border-radius: 6px;
  background-color: #2c3e50;
  overflow: hidden;
}

.panel-head {
  height: 44px;
  display: flex;
  align-items: center;
  padding: 0 14px;
  background-color: #34495e;
  font-size: 16px;
  font-weight: 500;
}

.p-ico {
  width: 18px;
  height: 16px;
  margin-right: 7px;
  color: #ffffff;
}

.p-map {
  width: 19px;
  margin-right: 8px;
}

.p-db {
  width: 15px;
  margin-right: 8px;
}

.p-tools {
  height: 18px;
}

.chev {
  width: 15px;
  height: 10px;
  margin-left: auto;
  color: #ffffff;
}

.basemaps {
  height: 149px;
  padding: 15px 15px 0;
}

.select {
  height: 50px;
  border: 1px solid #42586e;
  border-radius: 12px;
  background-color: #34495e;
  padding: 0 16px;
  line-height: 48px;
  font-size: 16px;
}

.hint {
  margin: 1px 0 0;
  font-size: 14px;
  line-height: 24px;
  color: #6c7a89;
}

.hint-2 {
  margin-top: 0;
  line-height: 20px;
}

.datalayers {
  height: 181px;
  padding: 17px 15px 0;
}

.add-layer {
  width: 328px;
  height: 48px;
  margin: 0 0 16px 2px;
  display: flex;
  align-items: center;
  justify-content: center;
  gap: 4px;
  border-radius: 12px;
  background-color: #27ae60;
  color: #ffffff;
  font-weight: 600;
  font-size: 16px;
}

.add-layer svg {
  width: 14px;
  height: 14px;
}

.layer {
  height: 75px;
  width: 328px;
  display: flex;
  justify-content: space-between;
  padding: 10px 9px 0 10px;
  border: 1px solid #3498db;
  border-radius: 5px;
  background-color: #1e3a5f;
}

.layer-top {
  display: flex;
  align-items: center;
  height: 28px;
}

.layer-top b {
  font-size: 17px;
  margin-right: 8px;
  font-weight: 700;
  color: #ffffff;
}

.eye {
  width: 18px;
  height: 12px;
  margin-right: 8px;
}

.cam {
  width: 16px;
  height: 14px;
  margin-right: 8px;
}

.badge {
  width: 60px;
  height: 28px;
  border-radius: 6px;
  background-color: #0dcaf0;
  font-size: 12px;
  font-weight: 700;
  color: #ffffff;
  text-align: center;
  line-height: 28px;
}

.layer-sub {
  margin-top: 6px;
  font-size: 14px;
  line-height: 18px;
  color: #6c757d;
}

.layer-btns {
  display: flex;
  gap: 5px;
  padding-top: 8px;
}

.lb {
  width: 27px;
  height: 24px;
  border-radius: 3px;
  display: flex;
  align-items: center;
  justify-content: center;
}

.lb svg {
  width: 13px;
  height: 13px;
}

.lb-blue { background-color: #3498db; }
.lb-green { background-color: #2ecc71; }
.lb-orange { background-color: #f39c12; }
.lb-red { background-color: #e74c3c; }

/* map */
.map {
  flex: 1;
  background-color: #dddddd;
  position: relative;
  overflow: hidden;
}

.marker {
  position: absolute;
  width: 41px;
  height: 41px;
}

.marker-top {
  z-index: 3;
}

.m-shadow {
  fill: rgba(0, 0, 0, .33);
  filter: blur(3.500px);
}

.zoomctl {
  position: absolute;
  left: 10px;
  top: 10px;
  z-index: 4;
  width: 33px;
  height: 64px;
  border: 2px solid rgba(0, 0, 0, .2);
  border-radius: 5px;
  background-clip: padding-box;
  display: flex;
  flex-direction: column;
}

.zoomctl span {
  flex: 1;
  background-color: #ffffff;
  font: 700 24px/30px "Liberation Sans", sans-serif;
  color: #000000;
  text-align: center;
}

.zoomctl span:first-child {
  border-bottom: 1px solid #cccccc;
  border-radius: 3px 3px 0 0;
}

.zoomctl span:last-child {
  border-radius: 0 0 3px 3px;
}

.popup {
  position: absolute;
  left: 0;
  top: 5px;
  width: 287px;
  height: 387px;
  padding-right: 16px;
  background-color: #ffffff;
  border-radius: 0 8px 8px 0;
  box-shadow: 0 3px 14px rgba(0, 0, 0, .3);
  z-index: 2;
  font-size: 12px;
  color: #333333;
}

.popup-x {
  position: absolute;
  right: 6px;
  top: 6px;
  color: #757575;
}

.popup-x svg {
  width: 11px;
  height: 11px;
}

.pop-title {
  height: 56px;
  margin-right: 1px;
  border-bottom: 2px solid #e3e3e3;
}

.pop-row {
  height: 57px;
  border-bottom: 1px solid #eeeeee;
  padding-top: 14px;
}

.pop-label {
  display: flex;
  align-items: center;
  padding-left: 5px;
  font-family: Inter, "Liberation Sans", sans-serif;
  font-size: 13px;
  line-height: 18px;
  font-weight: 600;
  color: #495057;
}

.pop-row .pop-label {
  padding-left: 3px;
  letter-spacing: .2px;
}

.pushpin {
  width: 9px;
  height: 16px;
  margin-right: 4px;
}

.pop-val {
  margin-top: 3px;
  font: 12px/16px "Liberation Sans", sans-serif;
  color: #333333;
}

.urlbox {
  margin: 11px 0 0;
  height: 84px;
  border-radius: 0 8px 8px 0;
  background-color: #eff1f4;
  padding-top: 4px;
}

.urlbox-head {
  height: 21px;
  display: flex;
  align-items: center;
  gap: 5px;
  padding-left: 9px;
  font-size: 13px;
  font-weight: 700;
  color: #495057;
}

.urlbox-head svg {
  width: 14px;
  height: 12px;
}

.urlbox-body {
  height: 49px;
  margin-right: 2px;
  display: flex;
  align-items: center;
  padding-left: 18px;
  gap: 11px;
  background-color: #ffffff;
  border: 1px solid #dee2e6;
  border-left: none;
  border-radius: 0 6px 6px 0;
}

.viewbtn {
  width: 80px;
  height: 28px;
  border-radius: 3px;
  background-color: #007bff;
  color: #ffffff;
  font: 700 12px/28px "Liberation Sans", sans-serif;
  text-align: center;
}

.urltext {
  font: 12px "Liberation Sans", sans-serif;
  color: #6c757d;
  white-space: nowrap;
}

.pop-remarks {
  height: 72px;
  padding-top: 14px;
  border-bottom: 1px solid #e3e3e3;
}

.pop-remarks .pop-val {
  margin-top: 3px;
}

.pop-btns {
  display: flex;
  gap: 8px;
  padding: 11px 0 0 6px;
}

.pill {
  width: 26px;
  height: 21px;
  border-radius: 11px;
  background-color: #ffffff;
  display: flex;
  align-items: center;
  justify-content: center;
}

.pill svg {
  width: 13px;
  height: 13px;
}

.pill-gray { border: 1px solid #6c757d; }
.pill-cyan { border: 1px solid #0dcaf0; }

.popup-tip {
  position: absolute;
  left: 110px;
  bottom: -10px;
  width: 20px;
  height: 10px;
  background-color: #ffffff;
  clip-path: polygon(0 0, 100% 0, 50% 100%);
}

/* scrollbar between page and devtools */
.page-scroll {
  width: 10px;
  flex: none;
  background-color: #f1f1f1;
  padding: 0 1px;
}

.page-scroll span {
  display: block;
  height: 845px;
  border-radius: 0 0 4px 4px;
  background-color: #c1c1c1;
}

/* devtools */
.devtools {
  flex: 1;
  min-width: 0;
  display: flex;
  flex-direction: column;
  border-left: 1px solid #d3e3fd;
  background-color: #ffffff;
  font-size: 11.500px;
  color: #474747;
}

.dt-tabs {
  height: 28px;
  flex: none;
  display: flex;
  align-items: center;
  padding-left: 7px;
  background-color: #edf2fa;
  border-top: 1px solid #e3e8ef;
  border-bottom: 1px solid #d3e3fd;
}

.dt-ico {
  width: 16px;
  height: 16px;
  margin-right: 12px;
  color: #474747;
}

.dt-sep {
  width: 1px;
  height: 18px;
  background-color: #d3e3fd;
  flex: none;
}

.dt-tab {
  height: 26px;
  padding: 0 10px;
  margin-right: 1px;
  line-height: 28px;
  white-space: nowrap;
}

.dt-tab.current {
  padding: 0 9px;
  color: #0b57d0;
  font-weight: 500;
  border-bottom: 2px solid #0b57d0;
}

.dt-more {
  width: 12px;
  height: 10px;
  margin-left: 1px;
}

.dt-right {
  margin-left: auto;
  display: flex;
  align-items: center;
}

.dt-err {
  width: 12px;
  height: 12px;
  margin-right: 2px;
}

.dt-count {
  margin-right: 8px;
}

.dt-right .dt-sep {
  margin-right: 10px;
}

.dt-right .dt-x {
  width: 14px;
  height: 14px;
  margin-right: 12px;
}

.dt-filter {
  height: 28px;
  flex: none;
  display: flex;
  align-items: center;
  padding-left: 7px;
  border-bottom: 1px solid #d3e3fd;
}

.dt-filter .dt-sep {
  margin: 0 7px;
}

.dt-filter .dt-ico + .dt-ico {
  margin-right: 3px;
}

.dt-filter .dt-gear {
  margin-left: 2px;
}

.dt-top {
  width: 36px;
  margin-left: 5px;
  white-space: nowrap;
}

.dt-eye {
  width: 18px;
  height: 12px;
  margin: 0 1px 0 0;
}

.dt-input {
  width: 266px;
  height: 20px;
  flex: none;
  margin-left: 1px;
  border-radius: 10px;
  background-color: #edf2fa;
  display: flex;
  align-items: center;
  gap: 7px;
  padding-left: 10px;
}

.dt-input svg {
  width: 12px;
  height: 12px;
}

.dt-levels {
  width: 88px;
  flex: none;
  margin-left: 12px;
  white-space: nowrap;
}

.dt-issues {
  width: 50px;
  flex: none;
  margin-left: -1px;
  white-space: nowrap;
}

.console {
  flex: 1;
  min-height: 0;
  display: flex;
}

.messages {
  flex: 1;
  padding: 2px 3px 0 4px;
  display: flex;
  flex-direction: column;
  gap: 4px;
}

.msg {
  height: 31.800px;
  flex: none;
  display: flex;
  padding: 1px 0 0 7px;
  border-radius: 5px;
  background-color: #fce9e7;
  font: 11px/15.500px "DejaVu Sans Mono", monospace;
  letter-spacing: -.02px;
  color: #7d1a12;
}

.msg pre {
  margin: 0;
  width: 458px;
  font: inherit;
  overflow: hidden;
}

.msg-err {
  width: 12px;
  height: 12px;
  margin: 1px 4px 0 0;
}

.msg a {
  color: #0b57d0;
  text-decoration: underline;
  white-space: nowrap;
}

.msg-net {
  width: 14px;
  height: 14px;
  margin: 1px 0 0 7px;
}

.prompt {
  width: 6px;
  height: 10px;
  margin: 4px 0 0 7px;
}

.con-scroll {
  width: 15px;
  flex: none;
  padding: 8px 2px 0 3px;
  display: flex;
  flex-direction: column;
  align-items: center;
}

.arrow-up {
  border: 5px solid transparent;
  border-top: none;
  border-bottom: 5px solid #a3a3a3;
}

.con-thumb {
  width: 9px;
  height: 165px;
  margin-top: 668px;
  border-radius: 4px;
  background-color: #b3b3b3;
}

.arrow-down {
  margin-top: 8px;
  border: 5px solid transparent;
  border-bottom: none;
  border-top: 5px solid #a3a3a3;
}

/* taskbar */
.taskbar {
  height: 40px;
  flex: none;
  display: flex;
  align-items: center;
  padding-left: 16px;
  background-color: #233036;
  color: #ffffff;
}

.tk-win { width: 16px; height: 16px; margin-right: 29px; }
.tk-search { width: 22px; height: 22px; margin-right: 29px; }
.tk-view { width: 17px; height: 16px; margin-right: 31px; }
.tk-copilot { width: 22px; height: 22px; margin-right: 27px; }
.tk-files { width: 22px; height: 18px; }

.tk-chrome {
  width: 48px;
  height: 40px;
  margin-left: 14px;
  display: flex;
  align-items: center;
  justify-content: center;
  background-color: #525e63;
  border-bottom: 2px solid #f5cfa5;
}

.tk-chrome svg {
  width: 24px;
  height: 24px;
}

.tk-p6 {
  width: 40px;
  height: 40px;
  margin-left: 5px;
  display: flex;
  align-items: center;
  justify-content: center;
  border-bottom: 2px solid #f5cfa5;
}

.tk-p6 span {
  width: 24px;
  height: 24px;
  background-color: #e3001b;
  font: 18px/24px "Liberation Sans", sans-serif;
  text-align: center;
  color: #ffffff;
}

.tray {
  margin-left: auto;
  display: flex;
  align-items: center;
  padding-right: 25px;
}

.tray-chev {
  width: 12px;
  height: 7px;
  margin-right: 10px;
}

.tray-ico {
  width: 16px;
  height: 17px;
  margin-right: 8px;
}

.clock {
  width: 70px;
  margin: 0 12px 0 -5px;
  font-size: 12px;
  line-height: 18px;
  text-align: center;
}

.tray-note {
  width: 16px;
  height: 16px;
}
```
